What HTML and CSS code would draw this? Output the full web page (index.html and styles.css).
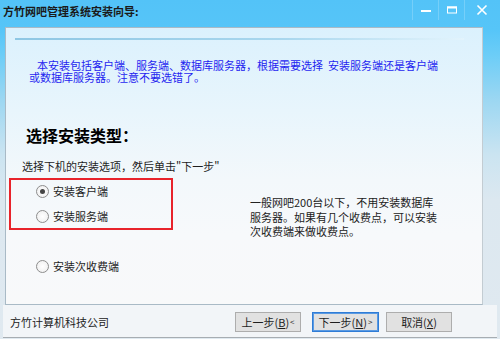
FILE: index.html
```html
<!DOCTYPE html>
<html lang="zh-CN">
<head>
<meta charset="utf-8">
<title>方竹网吧管理系统安装向导</title>
<link rel="stylesheet" href="styles.css">
</head>
<body>
<div class="window">
  <div class="titlebar">
    <span class="title">方竹网吧管理系统安装向导:</span>
    <div class="controls">
      <span class="ctl ctl-min"><svg width="12" height="12" viewBox="0 0 12 12"><rect x="1" y="6" width="10" height="2" fill="#fff"/></svg></span>
      <span class="ctl ctl-max"><svg width="12" height="12" viewBox="0 0 12 12"><rect x="1.5" y="3" width="9" height="6" fill="none" stroke="#fff" stroke-width="1"/><rect x="1" y="2.5" width="10" height="2" fill="#fff"/></svg></span>
      <span class="ctl ctl-close"><svg width="12" height="12" viewBox="0 0 12 12"><path d="M1.5 1.5 L10.5 10.5 M10.5 1.5 L1.5 10.5" stroke="#fff" stroke-width="1.6" fill="none"/></svg></span>
    </div>
  </div>
  <div class="body">
    <div class="panel">
      <div class="rule"></div>
      <p class="intro"><span class="line">本安装包括客户端、服务端、数据库服务器，根据需要选择&nbsp;&nbsp;安装服务端还是客户端</span><span class="line line2">或数据库服务器。注意不要选错了。</span></p>
      <h2 class="heading">选择安装类型：</h2>
      <p class="hint">选择下机的安装选项，然后单击"下一步"</p>
      <div class="options">
        <div class="opt-left">
          <div class="redbox">
            <div class="radio checked"><span class="dot"></span><span>安装客户端</span></div>
            <div class="radio"><span class="dot"></span><span>安装服务端</span></div>
          </div>
          <div class="radio radio-third"><span class="dot"></span><span>安装次收费端</span></div>
        </div>
        <p class="desc">一般网吧200台以下，不用安装数据库<br>服务器。如果有几个收费点，可以安装<br>次收费端来做收费点。</p>
      </div>
    </div>
  </div>
  <div class="footer">
    <span class="company">方竹计算机科技公司</span>
    <div class="buttons">
      <button class="btn btn-prev">上一步(<u>B</u>)<span class="arr">&lt;</span></button>
      <button class="btn btn-next focused">下一步(<u>N</u>) <span class="arr">&gt;</span></button>
      <button class="btn btn-cancel">取消(<u>X</u>)</button>
    </div>
  </div>
</div>
</body>
</html>
```
FILE: styles.css
```css
* { box-sizing: border-box; }
html, body { margin: 0; padding: 0; }
body {
  width: 500px;
  height: 339px;
  overflow: hidden;
  font-family: "Noto Sans CJK SC", "Microsoft YaHei", sans-serif;
  font-size: 11px;
  color: #1e1e1e;
}
.window {
  width: 500px;
  height: 339px;
  display: flex;
  flex-direction: column;
  background: linear-gradient(to bottom, #53c3f8 0px, #56c5f8 30px, #6ccdf7 55px, #9cd7f2 100px, #cbe4f1 155px, #dce8f0 200px, #e0e9f0 100%);
}
.titlebar {
  height: 27px;
  display: flex;
  align-items: flex-start;
  flex-shrink: 0;
}
.title {
  padding: 4px 0 0 3px;
  line-height: 14px;
  font-size: 11px;
  font-weight: bold;
  color: #1a1a1a;
}
.controls {
  margin-left: auto;
  margin-right: 1px;
  display: flex;
  height: 20px;
}
.ctl {
  height: 20px;
  display: flex;
  align-items: center;
  justify-content: center;
  border-left: 1px solid rgba(255,255,255,0.2);
}
.ctl-min { width: 26px; }
.ctl-max { width: 26px; }
.ctl-close { width: 35px; }
.body {
  height: 278px;
  padding: 0 17px 0 5px;
  flex-shrink: 0;
}
.panel {
  height: 278px;
  border: 1px solid #a9bac6;
  border-right-color: #c3ccd2;
  background: linear-gradient(to bottom, #dbf1fd 0%, #e8f5fc 30%, #f3f8fb 55%, #f7f9fb 75%, #f8f9fa 100%);
  display: flex;
  flex-direction: column;
}
.rule {
  margin: 10px 0 0 9px;
  width: 449px;
  height: 2px;
  background: linear-gradient(to right, #8ec7e4 0%, #a9d7ee 60%, rgba(230,245,252,0.6) 100%);
}
.intro {
  margin: 19px 0 0 23px;
  font-size: 11px;
  color: #1f1ff0;
  display: flex;
  flex-direction: column;
}
.intro .line {
  display: block;
  height: 12px;
  line-height: 12px;
  white-space: nowrap;
  padding-left: 8px;
}
.intro .line2 { padding-left: 0; }
.heading {
  margin: 43px 0 0 20px;
  font-size: 16px;
  line-height: 18px;
  font-weight: bold;
  color: #000;
}
.hint {
  margin: 15px 0 0 16px;
  line-height: 14px;
  color: #1e1e1e;
}
.options {
  margin-top: 5px;
  display: grid;
  grid-template-columns: 244px 1fr;
}
.redbox {
  margin-left: 3px;
  width: 164px;
  height: 52px;
  border: 2px solid #e8232b;
  padding-left: 25px;
  display: flex;
  flex-direction: column;
  gap: 3px;
}
.radio {
  height: 22px;
  display: flex;
  align-items: center;
  gap: 4px;
  color: #1e1e1e;
}
.radio-third {
  margin: 25px 0 0 30px;
}
.dot {
  width: 13px;
  height: 13px;
  border-radius: 50%;
  border: 1px solid #8d8d8d;
  background: radial-gradient(circle, #ffffff 0%, #f2f2f2 70%, #e6e6e6 100%);
  display: flex;
  align-items: center;
  justify-content: center;
  flex-shrink: 0;
}
.radio.checked .dot::after {
  content: "";
  width: 5px;
  height: 5px;
  border-radius: 50%;
  background: #444;
}
.desc {
  margin: 17px 0 0 0;
  line-height: 14.5px;
  color: #222;
}
.footer {
  height: 33px;
  margin: 0 3px;
  background: #f2f5f8;
  border-bottom: 1px solid #a7adb2;
  display: flex;
  align-items: center;
  flex-shrink: 0;
}
.company {
  padding-left: 7px;
  padding-top: 2px;
  color: #222;
}
.buttons {
  margin-left: auto;
  margin-right: 45px;
  display: flex;
  align-items: center;
  padding-top: 2px;
}
.btn {
  height: 20px;
  width: 66px;
  padding: 0;
  border: 1px solid #adadad;
  background: #e1e1e1;
  font-family: inherit;
  font-size: 11px;
  color: #1e1e1e;
  line-height: 18px;
  display: flex;
  align-items: center;
  justify-content: center;
}
.btn u { text-decoration: underline; text-underline-offset: 1px; }
.btn .arr { font-size: 8px; margin-left: 1px; }
.btn-next { width: 67px; margin-left: 11px; }
.btn-cancel { margin-left: 7px; }
.focused {
  border-color: #2f7cd6;
  box-shadow: inset 0 0 0 1px #5a9ae2;
}
```
